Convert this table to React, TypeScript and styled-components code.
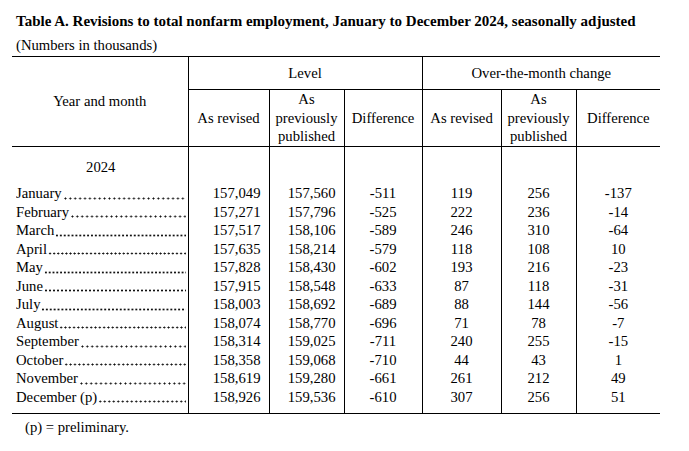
import React from "react";
import styled, { createGlobalStyle } from "styled-components";

const GlobalStyle = createGlobalStyle`
  html, body { margin: 0; padding: 0; background: #fff; }
  body { font-family: "Liberation Serif", "Times New Roman", serif; color: #000; }
`;

const Page = styled.div`
  padding: 12px 0 0 12px;
  width: 648px;
  font-size: 14.7px;
  line-height: 18.5px;
`;

const Title = styled.h1`
  margin: 0 0 6px 4px;
  font-size: 15px;
  line-height: 18px;
  font-weight: bold;
  white-space: nowrap;
`;

const Subtitle = styled.div`
  margin: 0 0 2px 4px;
  line-height: 18px;
`;

const Table = styled.table`
  border-collapse: collapse;
  table-layout: fixed;
  width: 648px;
  border-top: 1px solid #000;
  border-bottom: 1px solid #000;
`;

const HeadCell = styled.th<{ $h?: number; $stub?: boolean }>`
  font-weight: normal;
  text-align: center;
  vertical-align: middle;
  padding: 0;
  height: ${(p) => (p.$h ? `${p.$h}px` : "auto")};
  border-bottom: 1px solid #000;
  border-left: ${(p) => (p.$stub ? "none" : "1px solid #000")};
`;

const Cell = styled.td<{ $align?: "right" | "center"; $pt?: number; $pb?: number }>`
  padding: ${(p) => p.$pt ?? 0}px ${(p) => (p.$align === "right" ? 8 : 0)}px ${(p) => p.$pb ?? 0}px 0;
  text-align: ${(p) => p.$align ?? "center"};
  border-left: 1px solid #000;
  white-space: nowrap;
`;

const StubCell = styled.td<{ $pt?: number; $pb?: number; $center?: boolean }>`
  padding: ${(p) => p.$pt ?? 0}px 2px ${(p) => p.$pb ?? 0}px 4px;
  text-align: ${(p) => (p.$center ? "center" : "left")};
  white-space: nowrap;
`;

const StubInner = styled.div`
  display: flex;
  overflow: hidden;
`;

const Leader = styled.span<{ $gap: number }>`
  flex: 1;
  min-width: 0;
  margin-left: 1px;
  background-image: radial-gradient(circle at center, #111 0.75px, transparent 1.3px);
  background-size: ${(p) => p.$gap}px 3px;
  background-repeat: repeat-x;
  background-position: 0 12.5px;
`;

const Footnote = styled.div`
  margin: 4px 0 0 13px;
  line-height: 18px;
`;

type Row = {
  month: string;
  gap: number;
  vals: [string, string, string, string, string, string];
};

const rows: Row[] = [
  { month: "January", gap: 4.9, vals: ["157,049", "157,560", "-511", "119", "256", "-137"] },
  { month: "February", gap: 4.9, vals: ["157,271", "157,796", "-525", "222", "236", "-14"] },
  { month: "March", gap: 3.9, vals: ["157,517", "158,106", "-589", "246", "310", "-64"] },
  { month: "April", gap: 4.1, vals: ["157,635", "158,214", "-579", "118", "108", "10"] },
  { month: "May", gap: 3.8, vals: ["157,828", "158,430", "-602", "193", "216", "-23"] },
  { month: "June", gap: 4.0, vals: ["157,915", "158,548", "-633", "87", "118", "-31"] },
  { month: "July", gap: 3.9, vals: ["158,003", "158,692", "-689", "88", "144", "-56"] },
  { month: "August", gap: 4.3, vals: ["158,074", "158,770", "-696", "71", "78", "-7"] },
  { month: "September", gap: 4.9, vals: ["158,314", "159,025", "-711", "240", "255", "-15"] },
  { month: "October", gap: 4.4, vals: ["158,358", "159,068", "-710", "44", "43", "1"] },
  { month: "November", gap: 4.9, vals: ["158,619", "159,280", "-661", "261", "212", "49"] },
  { month: "December (p)", gap: 4.5, vals: ["158,926", "159,536", "-610", "307", "256", "51"] },
];

const widths = [176, 81, 75, 78, 79, 75, 84];

export default function App() {
  const last = rows.length - 1;
  return (
    <>
      <GlobalStyle />
      <Page>
        <Title>Table A. Revisions to total nonfarm employment, January to December 2024, seasonally adjusted</Title>
        <Subtitle>(Numbers in thousands)</Subtitle>
        <Table>
          <colgroup>
            {widths.map((w, i) => (
              <col key={i} style={{ width: w }} />
            ))}
          </colgroup>
          <thead>
            <tr>
              <HeadCell rowSpan={2} $stub>
                Year and month
              </HeadCell>
              <HeadCell colSpan={3} $h={32}>
                Level
              </HeadCell>
              <HeadCell colSpan={3} $h={32}>
                Over-the-month change
              </HeadCell>
            </tr>
            <tr>
              <HeadCell $h={53}>As revised</HeadCell>
              <HeadCell>
                As
                <br />
                previously
                <br />
                published
              </HeadCell>
              <HeadCell>Difference</HeadCell>
              <HeadCell>As revised</HeadCell>
              <HeadCell>
                As
                <br />
                previously
                <br />
                published
              </HeadCell>
              <HeadCell>Difference</HeadCell>
            </tr>
          </thead>
          <tbody>
            <tr>
              <StubCell $center $pt={11} $pb={8}>
                2024
              </StubCell>
              {[0, 1, 2, 3, 4, 5].map((i) => (
                <Cell key={i} />
              ))}
            </tr>
            {rows.map((r, ri) => (
              <tr key={r.month}>
                <StubCell $pb={ri === last ? 7 : 0}>
                  <StubInner>
                    <span>{r.month}</span>
                    <Leader $gap={r.gap} />
                  </StubInner>
                </StubCell>
                {r.vals.map((v, i) => (
                  <Cell key={i} $align={i < 2 ? "right" : "center"} $pb={ri === last ? 7 : 0}>
                    {v}
                  </Cell>
                ))}
              </tr>
            ))}
          </tbody>
        </Table>
        <Footnote>(p) = preliminary.</Footnote>
      </Page>
    </>
  );
}
